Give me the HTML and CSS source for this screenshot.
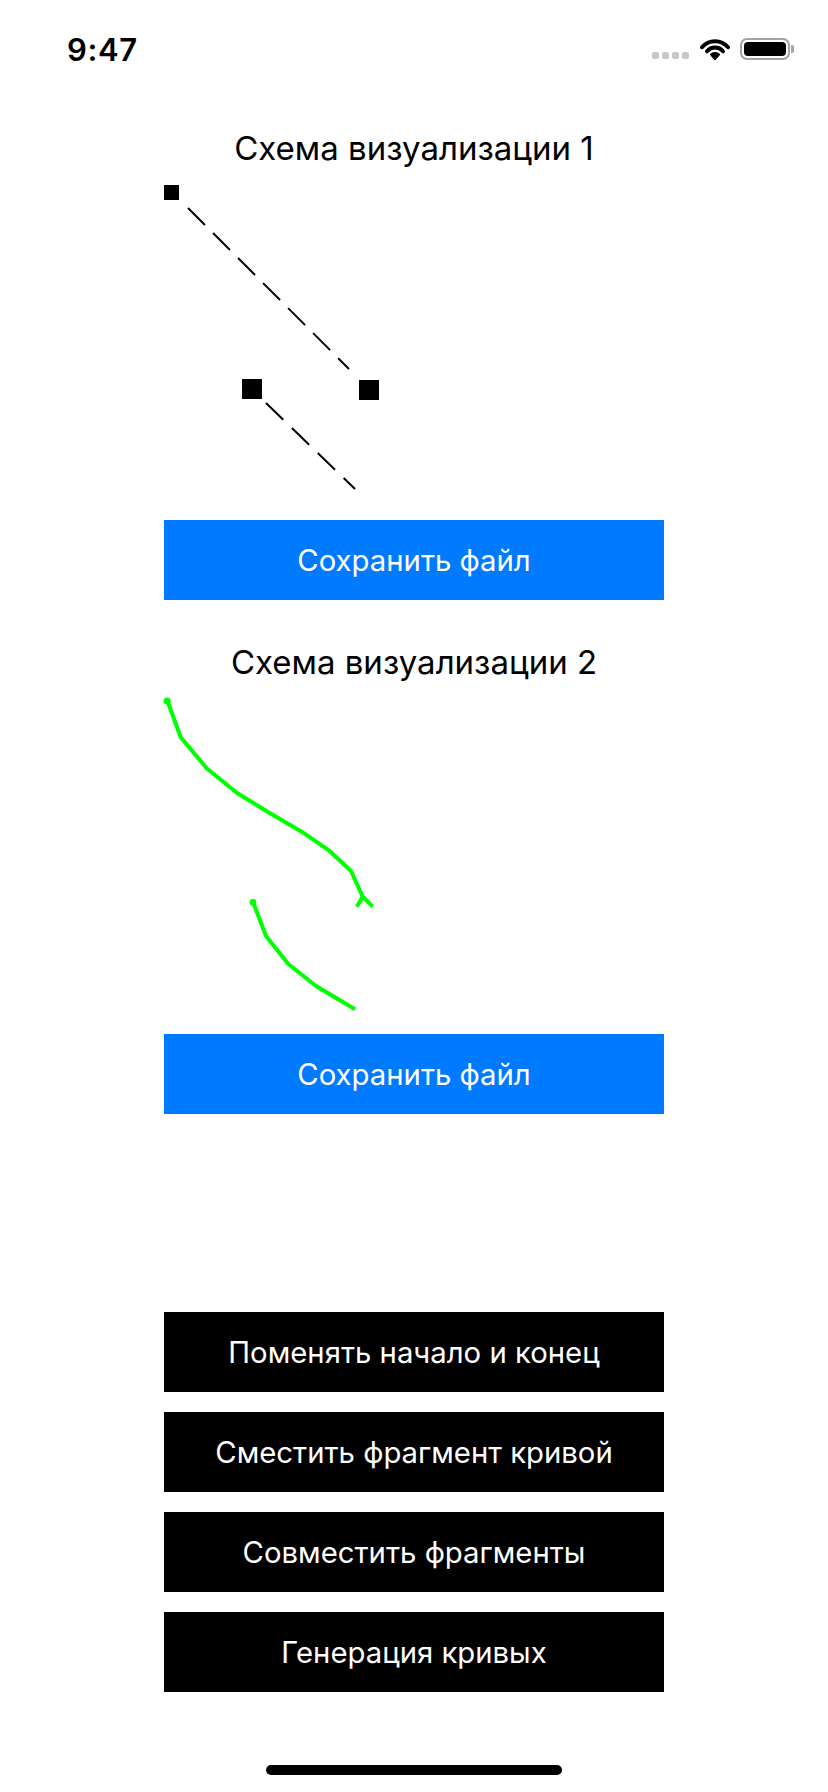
FILE: index.html
```html
<!DOCTYPE html>
<html lang="ru">
<head>
<meta charset="utf-8">
<title>Схемы визуализации</title>
<link rel="stylesheet" href="styles.css">
</head>
<body>
<div class="screen">
  <header class="statusbar">
    <span class="time">9:47</span>
    <div class="status-icons">
      <div class="signal"><i></i><i></i><i></i><i></i></div>
      <svg class="wifi" width="30" height="22" viewBox="0 0 30 22">
        <path d="M2 9.2 A17 17 0 0 1 28 9.2" fill="none" stroke="#000" stroke-width="4" stroke-linecap="round"/>
        <path d="M7 13.3 A10.5 10.5 0 0 1 23 13.3" fill="none" stroke="#000" stroke-width="4" stroke-linecap="round"/>
        <path d="M15 21.5 L10.6 16.6 A6 6 0 0 1 19.4 16.6 Z" fill="#000" stroke="#000" stroke-width="1.5" stroke-linejoin="round"/>
      </svg>
      <div class="battery">
        <div class="battery-body"><div class="battery-level"></div></div>
        <div class="battery-cap"></div>
      </div>
    </div>
  </header>

  <main class="content">
    <h2 class="scheme-title">Схема визуализации 1</h2>
    <svg class="canvas" width="500" height="352" viewBox="0 0 500 352">
      <line x1="24" y1="40" x2="185" y2="201" stroke="#000" stroke-width="2" stroke-dasharray="24 11.4"/>
      <line x1="102" y1="235" x2="191" y2="321" stroke="#000" stroke-width="2" stroke-dasharray="24 12"/>
      <rect x="0" y="17" width="15" height="15" fill="#000"/>
      <rect x="195" y="212" width="20" height="20" fill="#000"/>
      <rect x="78" y="211" width="20" height="20" fill="#000"/>
    </svg>
    <button class="btn btn-blue">Сохранить файл</button>

    <h2 class="scheme-title second">Схема визуализации 2</h2>
    <svg class="canvas" width="500" height="352" viewBox="0 0 500 352">
      <polyline points="3.7,19.7 16.7,55.3 42.7,86.3 72.7,110.7 104.3,130.3 137.7,149.7 165.3,168.7 187,189 198.7,214.7" fill="none" stroke="#00ff00" stroke-width="4" stroke-linejoin="round"/>
      <polyline points="192.7,224.7 198.7,214.7 208.7,224.7" fill="none" stroke="#00ff00" stroke-width="4" stroke-linejoin="round"/>
      <circle cx="3.2" cy="19" r="3.6" fill="#00ff00"/>
      <polyline points="89.3,220.7 102,254 124.3,282 152,304 191,327.3" fill="none" stroke="#00ff00" stroke-width="4" stroke-linejoin="round"/>
      <circle cx="89" cy="220.3" r="3.4" fill="#00ff00"/>
    </svg>
    <button class="btn btn-blue">Сохранить файл</button>

    <div class="actions">
      <button class="btn btn-dark">Поменять начало и конец</button>
      <button class="btn btn-dark">Сместить фрагмент кривой</button>
      <button class="btn btn-dark">Совместить фрагменты</button>
      <button class="btn btn-dark">Генерация кривых</button>
    </div>
  </main>

  <div class="home-indicator"></div>
</div>
</body>
</html>
```

FILE: styles.css
```css
* {
  box-sizing: border-box;
}

html, body {
  margin: 0;
  padding: 0;
  background: #ffffff;
}

body {
  font-family: Inter, "Noto Sans", "DejaVu Sans", sans-serif;
  color: #000;
}

.screen {
  width: 828px;
  height: 1792px;
  display: flex;
  flex-direction: column;
  align-items: center;
  overflow: hidden;
}

.statusbar {
  width: 100%;
  height: 98px;
  display: flex;
  align-items: center;
  justify-content: space-between;
  padding: 0 34px 0 67px;
}

.time {
  font-size: 31px;
  font-weight: 600;
  line-height: 1;
  letter-spacing: 0.6px;
}

.status-icons {
  display: flex;
  align-items: flex-end;
  gap: 10px;
}

.signal {
  display: flex;
  gap: 3px;
  margin-bottom: 1px;
  margin-right: 1px;
}

.signal i {
  display: block;
  width: 7px;
  height: 7px;
  border-radius: 2px;
  background: #c8c8c8;
}

.wifi {
  display: block;
}

.battery {
  display: flex;
  align-items: center;
  gap: 1px;
}

.battery-body {
  width: 50px;
  height: 22px;
  border: 2px solid #a3a3a3;
  border-radius: 7px;
  padding: 2px;
}

.battery-level {
  width: 100%;
  height: 100%;
  background: #000;
  border-radius: 4px;
}

.battery-cap {
  width: 3px;
  height: 8px;
  background: #a3a3a3;
  border-radius: 0 2px 2px 0;
}

.content {
  width: 500px;
  display: flex;
  flex-direction: column;
  align-items: stretch;
}

.scheme-title {
  margin: 30px 0 0;
  height: 40px;
  font-size: 33px;
  font-weight: 400;
  line-height: 40px;
  text-align: center;
}

.scheme-title.second {
  margin-top: 42px;
}

.canvas {
  display: block;
  width: 500px;
  height: 352px;
  overflow: visible;
}

.btn {
  display: block;
  width: 500px;
  height: 80px;
  border: none;
  border-radius: 0;
  padding: 0;
  margin: 0;
  font-family: Inter, "Noto Sans", "DejaVu Sans", sans-serif;
  font-size: 29.3px;
  font-weight: 400;
  color: #fff;
  text-align: center;
}

.btn-blue {
  background: #007aff;
}

.btn-dark {
  background: #000;
}

.actions {
  margin-top: 198px;
  display: flex;
  flex-direction: column;
  gap: 20px;
}

.home-indicator {
  margin-top: 73px;
  width: 296px;
  height: 10px;
  border-radius: 5px;
  background: #000;
}
```
